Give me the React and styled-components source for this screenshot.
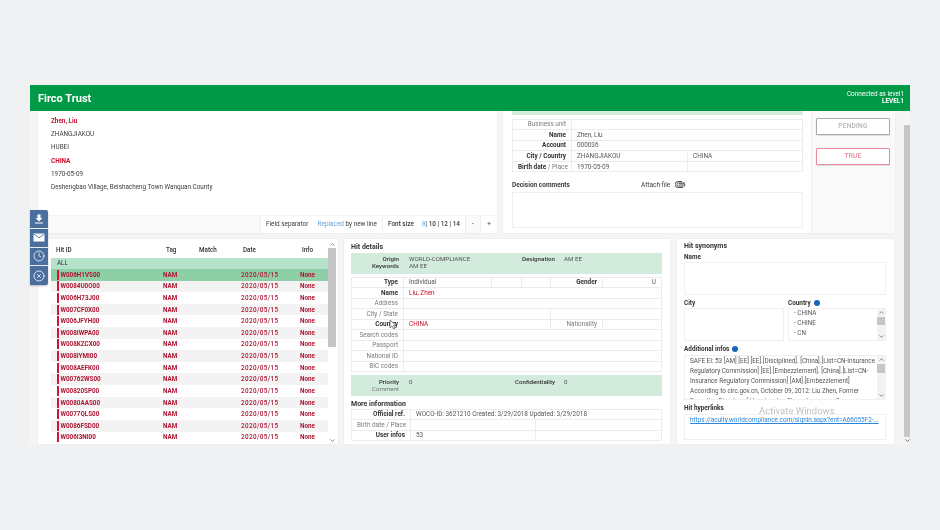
import React from "react";
import styled, { createGlobalStyle } from "styled-components";
import { Clock, XCircle, ChevronUp, ChevronDown } from "lucide-react";

const Global = createGlobalStyle`
  html, body { margin: 0; padding: 0; background: #f0f1f2; }
  * { box-sizing: border-box; }
  body { font-family: Roboto, "Liberation Sans", sans-serif; color: #3c3c3c; }
`;

const Page = styled.div`
  position: relative;
  width: 940px;
  height: 530px;
  padding: 85px 30px 0;
  overflow: hidden;
  filter: blur(0.35px);
`;
const Header = styled.header`
  height: 26px;
  background: #009a47;
  color: #fff;
  display: flex;
  align-items: center;
  justify-content: space-between;
  padding: 0 6px 0 8px;
`;
const Brand = styled.div`
  font-size: 11px;
  font-weight: 700;
`;
const Conn = styled.div`
  font-size: 6.4px;
  line-height: 7.5px;
  text-align: right;
  b { display: block; }
`;
const Body = styled.div`
  height: 334px;
  background: #f5f5f5;
  display: flex;
  padding-left: 8px;
`;
const Content = styled.div`
  width: 857px;
  display: flex;
  flex-direction: column;
  gap: 6px;
`;
const Row = styled.div`
  display: flex;
  gap: 6px;
`;
const Card = styled.section`
  background: #fff;
  box-shadow: 0 0 2px rgba(0, 0, 0, 0.08);
  width: ${(p) => p.$w}px;
  height: ${(p) => p.$h}px;
  flex: none;
  overflow: hidden;
`;
const TopLeft = styled(Card)`
  display: flex;
  flex-direction: column;
  background: #f3f3f3;
`;
const Address = styled.div`
  height: 104px;
  background: #fff;
  padding: 3.5px 13px;
  font-size: 6.35px;
  line-height: 13.35px;
`;
const AddrLine = styled.div`
  color: ${(p) => (p.$hit ? "#c8102e" : "#3c3c3c")};
  font-weight: ${(p) => (p.$hit ? 700 : 400)};
`;
const Bar = styled.div`
  height: 17px;
  margin-top: 1px;
  display: flex;
  background: #fff;
  font-size: 6.4px;
  line-height: 16px;
`;
const BarSeg = styled.div`
  width: ${(p) => p.$w}px;
  flex: none;
  display: flex;
  justify-content: ${(p) => (p.$center ? "center" : "space-between")};
  padding: 0 ${(p) => p.$pad ?? 5}px;
  white-space: nowrap;
  border-left: 1px solid #efefef;
  background: ${(p) => (p.$muted ? "#fafafa" : "#fff")};
  b { font-weight: 500; }
`;
const Blue = styled.span`
  color: #6aa5d8;
`;
const TopRight = styled(Card)`
  display: flex;
`;
const Decision = styled.div`
  width: 308px;
  padding: 0 8px 0 9px;
`;
const GreenStrip = styled.div`
  height: 4px;
  background: #d5ebdc;
`;
const Grid = styled.table`
  border-collapse: collapse;
  table-layout: fixed;
  width: 100%;
  font-size: 6.4px;
  td {
    border: 1px solid #ececec;
    height: ${(p) => p.$rh || 10.5}px;
    padding: 0 5px;
    line-height: 6px;
    white-space: nowrap;
    overflow: hidden;
  }
`;
const Lab = styled.td`
  text-align: right;
  font-weight: ${(p) => (p.$on ? 700 : 400)};
  color: ${(p) => (p.$on ? "#333" : "#7c7c7c")};
`;
const Val = styled.td`
  color: ${(p) => (p.$hit ? "#c8102e" : "#555")};
  text-align: ${(p) => p.$align || "left"};
`;
const Sub = styled.span`
  color: #7c7c7c;
  font-weight: 400;
`;
const CommentHead = styled.div`
  display: flex;
  align-items: center;
  height: 15px;
  margin-top: 5px;
  font-size: 6.5px;
  b { width: 129px; font-weight: 700; }
  svg { margin-left: 5px; }
`;
const Field = styled.div`
  border: 1px solid #f0f0f0;
  background: #fff;
  height: ${(p) => p.$h}px;
  overflow: hidden;
`;
const Actions = styled.div`
  flex: 1;
  background: #fafafa;
  border-left: 1px solid #efefef;
  padding: 7px 5px 0 4px;
  display: flex;
  flex-direction: column;
  gap: 13.5px;
`;
const ActionButton = styled.div`
  height: 16.7px;
  border-radius: 1px;
  border: 1px solid ${(p) => (p.$red ? "#e88a9a" : "#aaa")};
  box-shadow: 0 1px 1px rgba(0, 0, 0, 0.12);
  color: ${(p) => (p.$red ? "#e88a9a" : "#b5b5b5")};
  background: #fff;
  text-align: center;
  font-size: 6.6px;
  line-height: 15px;
  font-weight: 500;
  letter-spacing: 0.2px;
`;
const HitsCard = styled(Card)`
  display: flex;
  padding: 2px 0 0 13px;
`;
const HitsList = styled.div`
  width: 277px;
  flex: none;
`;
const HitRow = styled.div`
  display: grid;
  grid-template-columns: 110px 40px 38px 59px 28px;
  align-items: center;
  height: 11.62px;
  padding-left: 2px;
  font-size: 6.3px;
  font-weight: 700;
  color: #ad1430;
  background: ${(p) => (p.$sel ? "#8ecfa8" : p.$odd ? "#f3f3f3" : "#fff")};
`;
const HeadRow = styled.div`
  display: grid;
  grid-template-columns: 110px 33px 44px 59px 20px;
  height: 17px;
  align-items: center;
  padding-left: 5px;
  font-size: 6.3px;
  font-weight: 500;
  color: #333;
`;
const AllRow = styled.div`
  height: 11px;
  background: #b6e1ca;
  font-size: 6.3px;
  line-height: 11px;
  padding-left: 6px;
  color: #333;
`;
const HitId = styled.span`
  border-left: 2.5px solid #d8112e;
  padding-left: 1.5px;
  height: 10px;
  line-height: 10px;
  margin-left: 4px;
`;
const Dated = styled.span`
  font-weight: 500;
  letter-spacing: 0.4px;
`;
const Rail = styled.div`
  width: ${(p) => p.$w || 8}px;
  flex: none;
  display: flex;
  flex-direction: column;
  align-items: center;
  color: #666;
  background: ${(p) => p.$bg || "transparent"};
`;
const Thumb = styled.div`
  width: 100%;
  background: #c6c6c6;
  height: ${(p) => p.$h}px;
  flex: none;
`;
const Track = styled.div`
  flex: 1;
  width: 100%;
`;
const DetailCard = styled(Card)`
  padding: 3px 8px 0 7px;
`;
const Title = styled.div`
  font-size: 7px;
  font-weight: 700;
  color: #333;
  height: ${(p) => p.$h || 11}px;
  line-height: ${(p) => p.$h || 11}px;
`;
const GreenBlock = styled.div`
  height: 20.5px;
  background: #d3ebdc;
  font-size: 6.2px;
  display: grid;
  grid-template-columns: 48px 10px 91px 55px 9px 1fr;
  grid-auto-rows: 7px;
  padding-top: ${(p) => p.$top}px;
  margin-bottom: 3px;
`;
const GreenKey = styled.span`
  text-align: right;
  grid-column: ${(p) => p.$col || 1};
  font-weight: ${(p) => (p.$off ? 400 : 500)};
  color: ${(p) => (p.$off ? "#777" : "#333")};
`;
const GreenVal = styled.span`
  grid-column: ${(p) => p.$col};
  color: #555;
`;
const Gap = styled.div`
  height: ${(p) => p.$h}px;
  width: ${(p) => (p.$w ? p.$w + "px" : "auto")};
  flex: none;
`;
const SynCard = styled(Card)`
  padding: 2px 8px 0 7px;
  margin-left: 1px;
`;
const SmallLabel = styled.div`
  font-size: 6.4px;
  font-weight: 700;
  color: #333;
  height: ${(p) => p.$h || 10}px;
  line-height: ${(p) => p.$h || 10}px;
  display: flex;
  align-items: center;
  gap: 3px;
`;
const Dot = styled.i`
  width: 6px;
  height: 6px;
  border-radius: 50%;
  background: #1565c0;
  display: inline-block;
`;
const Two = styled.div`
  display: grid;
  grid-template-columns: 100px 98px;
  gap: 0 4px;
`;
const ScrollField = styled(Field)`
  display: flex;
  justify-content: space-between;
`;
const ListText = styled.div`
  font-size: 6.35px;
  line-height: 10px;
  margin-top: ${(p) => p.$mt || 0}px;
  padding-left: 5px;
  color: #555;
  flex: 1;
  min-width: 0;
  white-space: nowrap;
  overflow: hidden;
`;
const Link = styled.div`
  font-size: 6.4px;
  color: #2a86d8;
  text-decoration: underline;
  padding: 1.5px 5px;
  white-space: nowrap;
`;
const SideTools = styled.div`
  position: absolute;
  left: 30px;
  top: 210px;
  width: 18px;
  background: #4a6f9e;
  border-radius: 0 2px 2px 0;
  box-shadow: 0 1px 2px rgba(0, 0, 0, 0.25);
  display: flex;
  flex-direction: column;
  color: #fff;
`;
const Tool = styled.div`
  height: 18.8px;
  display: flex;
  align-items: center;
  justify-content: center;
  border-bottom: ${(p) => (p.$last ? "none" : "1px solid #e8edf2")};
`;
const Watermark = styled.div`
  position: absolute;
  left: 759px;
  top: 405px;
  font-size: 9.5px;
  color: #c2c2c2;
`;
const Pointer = styled.svg`
  position: absolute;
  left: 389px;
  top: 319px;
`;

const ids = ["W006H1VS00","W0084U0O00","W006H73J00","W007CF0X00","W006JFYH00","W008IWPA00","W008KZCX00","W008IYMI00","W008AEFK00","W00762WS00","W00820SP00","W0080AAS00","W0077QLS00","W0086FSD00","W006I3NI00"];

const Scroll = ({ h, top = 0, bg }) => (
  <Rail $bg={bg}>
    <ChevronUp size={7} strokeWidth={2.5} />
    {top > 0 && <Gap $h={top} />}
    <Thumb $h={h} />
    <Track />
    <ChevronDown size={7} strokeWidth={2.5} />
  </Rail>
);

export default function App() {
  return (
    <Page>
      <Global />
      <Header>
        <Brand>Firco Trust</Brand>
        <Conn>Connected as level1<b>LEVEL1</b></Conn>
      </Header>
      <Body>
        <Content>
          <Row>
            <TopLeft $w={459} $h={122}>
              <Address>
                <AddrLine $hit>Zhen, Liu</AddrLine>
                <AddrLine>ZHANGJIAKOU</AddrLine>
                <AddrLine>HUBEI</AddrLine>
                <AddrLine $hit>CHINA</AddrLine>
                <AddrLine>1970-05-09</AddrLine>
                <AddrLine>Deshengbao Village, Beishacheng Town Wanquan County</AddrLine>
              </Address>
              <Bar>
                <BarSeg $w={222} $muted />
                <BarSeg $w={122}>
                  <span>Field separator</span>
                  <span><Blue>Replaced</Blue> by new line</span>
                </BarSeg>
                <BarSeg $w={83}>
                  <b>Font size</b>
                  <span><Blue>8</Blue><b>| 10 | 12 | 14</b></span>
                </BarSeg>
                <BarSeg $w={15} $pad={0} $center $muted>-</BarSeg>
                <BarSeg $w={17} $pad={0} $center>+</BarSeg>
              </Bar>
            </TopLeft>
            <TopRight $w={392} $h={122}>
              <Decision>
                <GreenStrip />
                <Gap $h={3.5} />
                <Grid $rh={10.6}>
                  <colgroup><col width="59" /><col width="116" /><col /></colgroup>
                  <tbody>
                    <tr><Lab>Business unit</Lab><Val colSpan={2} /></tr>
                    <tr><Lab $on>Name</Lab><Val colSpan={2}>Zhen, Liu</Val></tr>
                    <tr><Lab $on>Account</Lab><Val colSpan={2}>000036</Val></tr>
                    <tr><Lab $on>City / Country</Lab><Val>ZHANGJIAKOU</Val><Val>CHINA</Val></tr>
                    <tr><Lab $on>Birth date <Sub>/ Place</Sub></Lab><Val>1970-05-09</Val><Val /></tr>
                  </tbody>
                </Grid>
                <CommentHead>
                  <b>Decision comments</b>
                  Attach file
                  <svg width="11" height="7" viewBox="0 0 22 14" fill="none" stroke="#222" strokeWidth="1.6">
                    <path d="M20 4H7a3 3 0 0 0 0 6h11a2 2 0 0 0 0-4H8" />
                    <path d="M14 1H6a6 6 0 0 0 0 12h10" />
                  </svg>
                </CommentHead>
                <Field $h={36} />
              </Decision>
              <Actions>
                <ActionButton>PENDING</ActionButton>
                <ActionButton $red>TRUE</ActionButton>
              </Actions>
            </TopRight>
          </Row>
          <Row>
            <HitsCard $w={300} $h={205}>
              <HitsList>
                <HeadRow><span>Hit ID</span><span>Tag</span><span>Match</span><span>Date</span><span>Info</span></HeadRow>
                <AllRow>ALL</AllRow>
                {ids.map((id, i) => (
                  <HitRow key={id} $sel={i === 0} $odd={i % 2 === 1}>
                    <HitId>{id}</HitId>
                    <span>NAM</span>
                    <span />
                    <Dated>2020/05/15</Dated>
                    <span>None</span>
                  </HitRow>
                ))}
              </HitsList>
              <Scroll h={99} />
            </HitsCard>
            <DetailCard $w={326} $h={205}>
              <Title>Hit details</Title>
              <GreenBlock $top={2}>
                <GreenKey>Origin</GreenKey><GreenVal $col="3">WORLD-COMPLIANCE</GreenVal>
                <GreenKey $col={4}>Designation</GreenKey><GreenVal $col="6">AM EE</GreenVal>
                <GreenKey>Keywords</GreenKey><GreenVal $col="3">AM EE</GreenVal>
              </GreenBlock>
              <Grid $rh={10.5}>
                <colgroup><col width="52" /><col width="88" /><col width="30" /><col width="29" /><col width="52" /><col /></colgroup>
                <tbody>
                  <tr><Lab $on>Type</Lab><Val>Individual</Val><Val /><Val /><Lab $on>Gender</Lab><Val $align="right">U</Val></tr>
                  <tr><Lab $on>Name</Lab><Val colSpan={5} $hit>Liu, Zhen</Val></tr>
                  <tr><Lab>Address</Lab><Val colSpan={5} /></tr>
                  <tr><Lab>City / State</Lab><Val colSpan={3} /><Val colSpan={2} /></tr>
                  <tr><Lab $on>Country</Lab><Val colSpan={3} $hit>CHINA</Val><Lab>Nationality</Lab><Val /></tr>
                  <tr><Lab>Search codes</Lab><Val colSpan={5} /></tr>
                  <tr><Lab>Passport</Lab><Val colSpan={5} /></tr>
                  <tr><Lab>National ID</Lab><Val colSpan={5} /></tr>
                  <tr><Lab>BIC codes</Lab><Val colSpan={5} /></tr>
                </tbody>
              </Grid>
              <Gap $h={3} />
              <GreenBlock $top={3}>
                <GreenKey>Priority</GreenKey><GreenVal $col="3">0</GreenVal>
                <GreenKey $col={4}>Confidentiality</GreenKey><GreenVal $col="6">0</GreenVal>
                <GreenKey $off>Comment</GreenKey>
              </GreenBlock>
              <Title $h={10}>More information</Title>
              <Grid $rh={10.5}>
                <colgroup><col width="59" /><col width="125" /><col /></colgroup>
                <tbody>
                  <tr><Lab $on>Official ref.</Lab><Val colSpan={2}>WOCO-ID: 3621210 Created: 3/29/2018 Updated: 3/29/2018</Val></tr>
                  <tr><Lab>Birth date / Place</Lab><Val /><Val /></tr>
                  <tr><Lab $on>User infos</Lab><Val>53</Val><Val /></tr>
                </tbody>
              </Grid>
            </DetailCard>
            <SynCard $w={217} $h={205}>
              <Title $h={11}>Hit synonyms</Title>
              <SmallLabel $h={10}>Name</SmallLabel>
              <Field $h={33} />
              <Gap $h={3} />
              <Two>
                <SmallLabel>City</SmallLabel>
                <SmallLabel>Country <Dot /></SmallLabel>
                <Field $h={33} />
                <ScrollField $h={33}>
                  <ListText $mt={-1}>- CHINA<br />- CHINE<br />- CN</ListText>
                  <Scroll h={8} top={1} bg="#f3f3f3" />
                </ScrollField>
              </Two>
              <Gap $h={2.5} />
              <SmallLabel $h={11}>Additional infos <Dot /></SmallLabel>
              <ScrollField $h={45.5}>
                <ListText>
                  SAFE EI: 53 [AM] [EE] [EE].[Disciplined]. [China].[List=CN-Insurance<br />
                  Regulatory Commission] [EE].[Embezzlement]. [China].[List=CN-<br />
                  Insurance Regulatory Commission] [AM].[Embezzlement]<br />
                  According to circ.gov.cn, October 09, 2012: Liu Zhen, Former<br />
                  Executive Director of Hanging Jun Sheng Insurance Company
                </ListText>
                <Scroll h={9} top={1} bg="#f3f3f3" />
              </ScrollField>
              <Gap $h={1.5} />
              <SmallLabel $h={12}>Hit hyperlinks</SmallLabel>
              <Field $h={26}>
                <Link>https://acuity.worldcompliance.com/signin.aspx?ent=A66055F2-...</Link>
              </Field>
            </SynCard>
          </Row>
        </Content>
        <Gap $w={9} />
        <Rail $w={6}>
          <Gap $h={14} />
          <Thumb $h={312} />
          <ChevronDown size={7} strokeWidth={3} />
        </Rail>
      </Body>
      <SideTools>
        <Tool>
          <svg width="10" height="10" viewBox="0 0 10 10" fill="#fff"><path d="M3.5 0.5h3v3.5h2L5 7.6 1.5 4h2zM1 8.4h8v1.1H1z" /></svg>
        </Tool>
        <Tool>
          <svg width="12" height="9" viewBox="0 0 12 9"><rect x="0.5" y="0.5" width="11" height="8" fill="#fff" rx="0.5" /><path d="M1 1.2l5 3.6 5-3.6" fill="none" stroke="#4a6f9e" strokeWidth="0.9" /></svg>
        </Tool>
        <Tool><Clock size={12} strokeWidth={1.5} /></Tool>
        <Tool $last><XCircle size={12} strokeWidth={1.6} /></Tool>
      </SideTools>
      <Watermark>Activate Windows</Watermark>
      <Pointer width="9" height="12" viewBox="0 0 9 12">
        <path d="M1 1v8l2-2 1.5 3 1.5-.7L4.5 6.5H7z" fill="#fff" stroke="#555" strokeWidth="0.7" />
      </Pointer>
    </Page>
  );
}
